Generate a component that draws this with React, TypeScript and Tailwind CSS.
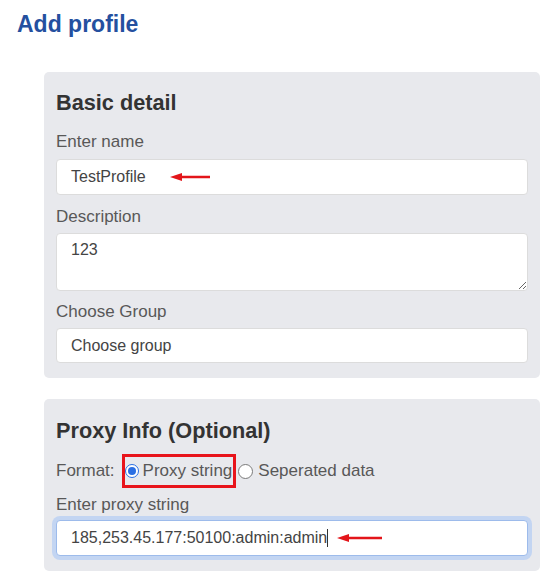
import React from "react";

const Arrow = ({ width }: { width: number }) => (
  <svg width={width} height="10" viewBox={`0 0 ${width} 10`} className="shrink-0">
    <line x1="9" y1="5" x2={width} y2="5" stroke="#e3151a" strokeWidth="2.5" />
    <polygon points="0,5 12,1 12,9" fill="#e3151a" />
  </svg>
);

const Label: React.FC<{ children: React.ReactNode; className?: string }> = ({
  children,
  className = "",
}) => (
  <div className={`text-[17px] leading-[20px] text-[#585858] ${className}`}>
    {children}
  </div>
);

const Radio = ({ checked }: { checked: boolean }) =>
  checked ? (
    <span className="w-[14px] h-[14px] rounded-full border-[1.5px] border-[#2b6fe3] bg-white flex items-center justify-center shrink-0">
      <span className="w-[8px] h-[8px] rounded-full bg-[#2b6fe3]" />
    </span>
  ) : (
    <span className="block w-[15px] h-[15px] rounded-full border border-[#7a7a7a] bg-white shrink-0" />
  );

export default function App() {
  return (
    <div
      className="min-h-[579px] bg-white pb-4"
      style={{ fontFamily: '"Liberation Sans", Arial, sans-serif' }}
    >
      <h1 className="pl-[17px] pt-[10px] text-[23px] leading-[28px] font-bold text-[#24509f]">
        Add profile
      </h1>

      <div className="ml-[44px] mr-[9px] mt-[34px] flex flex-col gap-[21px]">
        {/* Basic detail */}
        <section className="bg-[#e8e9ed] rounded-[5px] px-[12px] pt-[18px] pb-[15px]">
          <h2 className="text-[21.7px] leading-[26px] font-bold text-[#333]">
            Basic detail
          </h2>
          <Label className="mt-[16px] mb-[7px]">Enter name</Label>
          <div className="h-[36px] bg-white border border-[#dcdcdc] rounded-[4px] flex items-center pl-[14px] text-[16px] text-[#444]">
            <span>TestProfile</span>
            <span className="ml-[24px] flex">
              <Arrow width={40} />
            </span>
          </div>
          <Label className="mt-[12px] mb-[6px]">Description</Label>
          <textarea
            readOnly
            defaultValue="123"
            className="block w-full h-[58px] bg-white border border-[#dcdcdc] rounded-[4px] pl-[14px] pt-[6px] text-[16px] leading-[20px] text-[#444] outline-none"
          />
          <Label className="mt-[11px] mb-[6px]">Choose Group</Label>
          <div className="h-[35px] bg-white border border-[#dcdcdc] rounded-[4px] flex items-center pl-[14px] text-[16px] text-[#444]">
            Choose group
          </div>
        </section>

        {/* Proxy info */}
        <section className="bg-[#e8e9ed] rounded-[5px] px-[12px] pt-[19px] pb-[15px]">
          <h2 className="text-[21.7px] leading-[26px] font-bold text-[#333]">
            Proxy Info (Optional)
          </h2>
          <div className="mt-[10px] flex items-center text-[17px] leading-[20px] text-[#585858]">
            <span>Format:</span>
            <span className="ml-[7px] h-[34px] border-[3px] border-[#e8141b] flex items-center pr-[1px]">
              <Radio checked />
              <span className="ml-[4px]">Proxy string</span>
            </span>
            <span className="ml-[2px] flex">
              <Radio checked={false} />
            </span>
            <span className="ml-[5px]">Seperated data</span>
          </div>
          <Label className="mt-[7px] mb-[5px]">Enter proxy string</Label>
          <div className="h-[36px] bg-white border border-[#9dbbeb] ring-4 ring-[#c3d5f2] rounded-[4px] flex items-center pl-[14px] text-[16px] text-[#444]">
            <span>185,253.45.177:50100:admin:admin</span>
            <span className="w-px h-[18px] bg-[#333]" />
            <span className="ml-[9px] flex">
              <Arrow width={45} />
            </span>
          </div>
        </section>
      </div>
    </div>
  );
}
